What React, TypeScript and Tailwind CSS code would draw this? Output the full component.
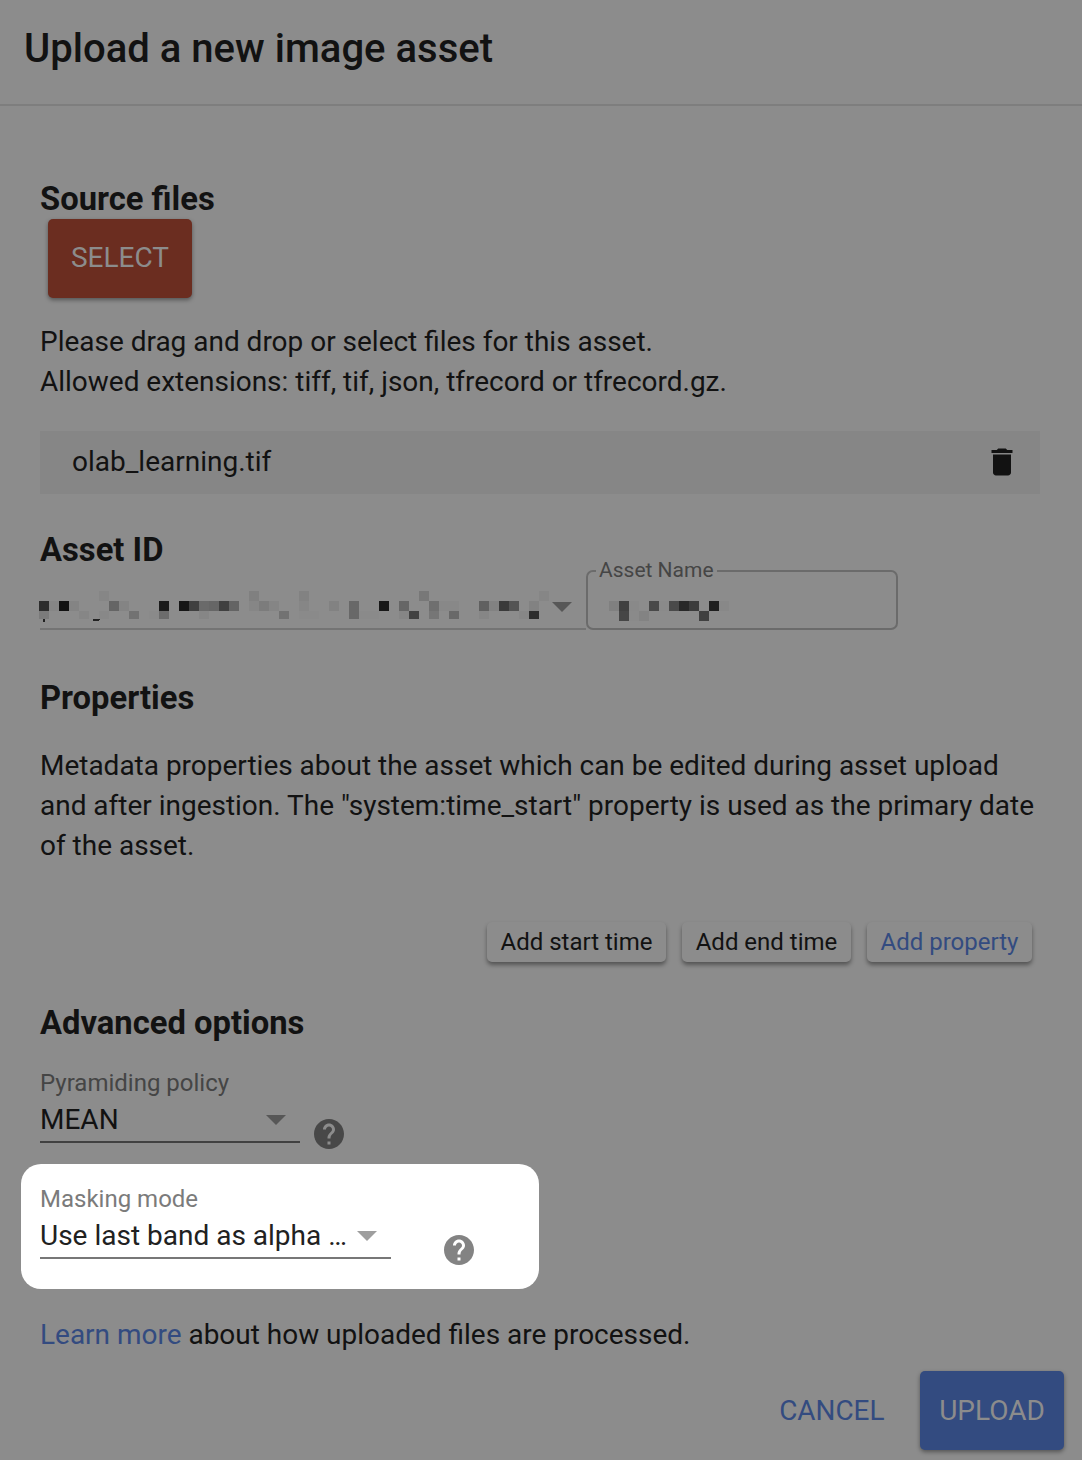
import React from "react";

type Cell = [col: number, row: number, color: string];

const FOLDER_CELLS: Cell[] = [
  [6, 0, "#868686"], [21, 0, "#808080"], [26, 0, "#828282"], [38, 0, "#787878"], [50, 0, "#868686"],
  [0, 1, "#2d2d2d"], [1, 1, "#868686"], [2, 1, "#121212"], [3, 1, "#848484"], [7, 1, "#656565"],
  [8, 1, "#848484"], [12, 1, "#1b1b1b"], [14, 1, "#161616"], [15, 1, "#404040"], [16, 1, "#6a6a6a"],
  [17, 1, "#666666"], [18, 1, "#404040"], [19, 1, "#646464"], [21, 1, "#868686"], [22, 1, "#7c7c7c"],
  [23, 1, "#858585"], [26, 1, "#868686"], [29, 1, "#828282"], [31, 1, "#686868"], [34, 1, "#181818"],
  [36, 1, "#666666"], [39, 1, "#6f6f6f"], [40, 1, "#888888"], [41, 1, "#888888"], [44, 1, "#606060"],
  [45, 1, "#828282"], [46, 1, "#3a3a3a"], [47, 1, "#545454"], [49, 1, "#828282"],
  [0, 2, "#7b7b7b"], [4, 2, "#868686"], [6, 2, "#888888"], [9, 2, "#727272"], [11, 2, "#8a8a8a"],
  [12, 2, "#6c6c6c"], [16, 2, "#868686"], [24, 2, "#727272"], [26, 2, "#8a8a8a"], [27, 2, "#8a8a8a"],
  [31, 2, "#686868"], [32, 2, "#8a8a8a"], [33, 2, "#8a8a8a"], [36, 2, "#868686"], [37, 2, "#424242"],
  [39, 2, "#767676"], [41, 2, "#696969"], [44, 2, "#868686"], [48, 2, "#878787"], [49, 2, "#2d2d2d"],
];

const NAME_CELLS: Cell[] = [
  [0, 0, "#808080"], [1, 0, "#404040"], [2, 0, "#898989"], [4, 0, "#494949"], [5, 0, "#8a8a8a"],
  [6, 0, "#4a4a4a"], [7, 0, "#282828"], [8, 0, "#3c3c3c"], [10, 0, "#1f1f1f"], [11, 0, "#888888"],
  [1, 1, "#464646"], [2, 1, "#8a8a8a"], [3, 1, "#838383"], [9, 1, "#404040"],
];

function Mosaic({ cells, width, height, className, children }: {
  cells: Cell[]; width: number; height: number; className: string; children?: React.ReactNode;
}) {
  return (
    <svg width={width} height={height} viewBox={`0 0 ${width} ${height}`} className={className} shapeRendering="crispEdges">
      {cells.map(([c, r, fill]) => (
        <rect key={`${c}-${r}`} x={c * 10} y={r * 10} width={10} height={r === 2 ? 8 : 10} fill={fill} />
      ))}
      {children}
    </svg>
  );
}

function Arrow({ className }: { className: string }) {
  return (
    <svg width="20" height="10" viewBox="0 0 20 10" className={className}>
      <path d="M0 0h20L10 10z" fill="currentColor" />
    </svg>
  );
}

function Help({ className }: { className: string }) {
  return (
    <svg width="36" height="36" viewBox="0 0 24 24" className={className}>
      <path
        fill="currentColor"
        d="M12 2C6.48 2 2 6.48 2 12s4.48 10 10 10 10-4.48 10-10S17.52 2 12 2zm1 17h-2v-2h2v2zm2.07-7.75l-.9.92C13.45 12.9 13 13.5 13 15h-2v-.5c0-1.1.45-2.1 1.17-2.83l1.24-1.26c.37-.36.59-.86.59-1.41 0-1.1-.9-2-2-2s-2 .9-2 2H8c0-2.21 1.79-4 4-4s4 1.79 4 4c0 .88-.36 1.68-.93 2.25z"
      />
    </svg>
  );
}

function Trash() {
  return (
    <svg width="36" height="36" viewBox="0 0 24 24" className="text-[#121212]">
      <path fill="currentColor" d="M6 19c0 1.1.9 2 2 2h8c1.1 0 2-.9 2-2V7H6v12zM19 4h-3.5l-1-1h-5l-1 1H5v2h14V4z" />
    </svg>
  );
}

function Heading({ children }: { children: React.ReactNode }) {
  return <h2 className="h-10 text-[32.76px] leading-[41px] font-bold whitespace-nowrap">{children}</h2>;
}

function SmallButton({ children, className }: { children: React.ReactNode; className: string }) {
  return (
    <button className={`h-10 rounded-[5px] bg-[#8c8c8c] text-[24px] leading-10 whitespace-nowrap shadow-[0_3px_4px_rgba(0,0,0,0.4)] ${className}`}>
      {children}
    </button>
  );
}

export default function App() {
  return (
    <div className="flex h-[1460px] w-[1082px] flex-col overflow-hidden bg-[#8c8c8c] font-['Roboto',sans-serif] text-[#121212]">
      <header className="h-[106px] shrink-0 border-b-2 border-[#7e7e7e] px-6 pt-6">
        <h1 className="text-[40.06px] leading-[50px] font-medium whitespace-nowrap">Upload a new image asset</h1>
      </header>

      <main className="flex flex-col pt-[73px] pr-[42px] pl-10">
        <Heading>Source files</Heading>
        <button className="ml-2 h-[79px] w-36 rounded-[5px] bg-[#6b2d20] pb-0.5 text-[28px] text-[#8c8c8c] shadow-[0_2px_4px_rgba(0,0,0,0.4)]">
          SELECT
        </button>
        <p className="mt-6 text-[27.97px] leading-10 whitespace-nowrap">
          Please drag and drop or select files for this asset.
          <br />
          Allowed extensions: tiff, tif, json, tfrecord or tfrecord.gz.
        </p>
        <div className="mt-[29px] flex h-[63px] items-center justify-between bg-[#868686] pr-5 pb-[1px] pl-8 text-[28px] leading-10">
          <span>olab_learning.tif</span>
          <Trash />
        </div>

        <div className="mt-9">
          <Heading>Asset ID</Heading>
        </div>
        <div className="flex h-[60px]">
          <div className="relative w-[546px] border-b-2 border-[#747474]">
            <Mosaic cells={FOLDER_CELLS} width={512} height={31} className="absolute top-[21px] -left-px">
              <rect x="4" y="28" width="2" height="3" fill="#222222" />
              <path d="M54 28h7v1h-1v1h-6z" fill="#222222" />
            </Mosaic>
            <Arrow className="absolute top-8 left-[512px] text-[#575757]" />
          </div>
          <div className="relative w-[312px] rounded-[7px] border-2 border-[#6b6b6b]">
            <span className="absolute -top-4 left-2 w-[121px] bg-[#8c8c8c] pl-[3px] text-[21px] leading-7 whitespace-nowrap text-[#454545]">
              Asset Name
            </span>
            <Mosaic cells={NAME_CELLS} width={120} height={20} className="absolute top-[29px] left-[21px]" />
          </div>
        </div>

        <div className="mt-12">
          <Heading>Properties</Heading>
        </div>
        <p className="mt-7 text-[27.97px] leading-10 whitespace-nowrap">
          Metadata properties about the asset which can be edited during asset upload
          <br />
          and after ingestion. The "system:time_start" property is used as the primary date
          <br />
          of the asset.
        </p>
        <div className="mt-14 flex justify-end gap-4 pr-2">
          <SmallButton className="w-[179px]">Add start time</SmallButton>
          <SmallButton className="w-[169px]">Add end time</SmallButton>
          <SmallButton className="w-[165px] text-[#334b80]">Add property</SmallButton>
        </div>

        <div className="mt-[41px]">
          <Heading>Advanced options</Heading>
        </div>
        <div className="mt-[25px] flex h-[96px]">
          <div className="h-[75px] w-[260px] border-b-2 border-[#414141]">
            <div className="text-[24px] leading-[30px] text-[#454545]">Pyramiding policy</div>
            <div className="mt-0.5 flex items-center justify-between pr-3.5 text-[28px] leading-10">
              MEAN
              <Arrow className="text-[#575757]" />
            </div>
          </div>
          <Help className="mt-12 ml-[11px] text-[#484848]" />
        </div>
      </main>

      <section className="ml-[21px] flex h-[125px] w-[518px] shrink-0 rounded-[20px] bg-white pt-5 pl-[19px]">
        <div className="h-[75px] w-[351px] border-b-2 border-[#777777]">
          <div className="text-[24px] leading-[30px] text-[#7b7b7b]">Masking mode</div>
          <div className="mt-0.5 flex items-center justify-between pr-3.5 text-[28px] leading-10 whitespace-nowrap text-[#212121]">
            Use last band as alpha …
            <Arrow className="text-[#9e9e9e]" />
          </div>
        </div>
        <Help className="mt-12 ml-[50px] text-[#838383]" />
      </section>

      <footer className="flex flex-col pt-[26px]">
        <p className="ml-10 text-[27.97px] leading-10 whitespace-nowrap">
          <a className="text-[#334b80]">Learn more</a> about how uploaded files are processed.
        </p>
        <div className="mt-4 flex justify-end gap-[35.5px] pr-[18px]">
          <button className="h-[79px] text-[27.9px] text-[#334b80]">CANCEL</button>
          <button className="h-[79px] w-36 rounded-[5px] bg-[#334b80] text-[28px] text-[#8c8c8c] shadow-[0_2px_4px_rgba(0,0,0,0.4)]">
            UPLOAD
          </button>
        </div>
      </footer>
    </div>
  );
}
